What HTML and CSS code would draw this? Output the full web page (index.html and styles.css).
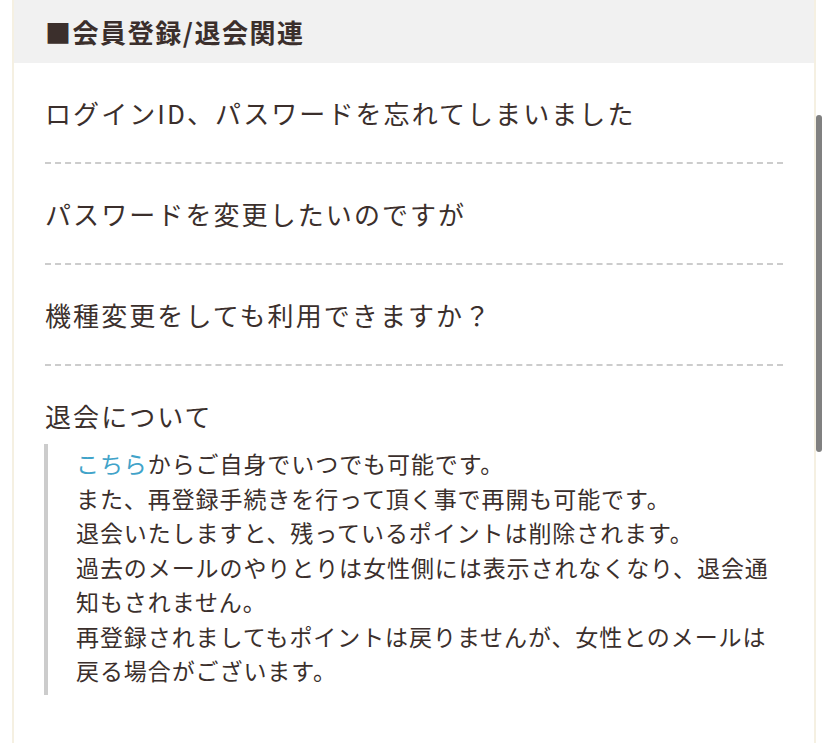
FILE: index.html
```html
<!DOCTYPE html>
<html lang="ja">
<head>
<meta charset="utf-8">
<link rel="stylesheet" href="styles.css">
</head>
<body>
<div class="wrap">
  <h2 class="section-title">■会員登録/退会関連</h2>
  <ul class="faq">
    <li class="faq-item"><p class="q">ログインID、パスワードを忘れてしまいました</p></li>
    <li class="faq-item"><p class="q">パスワードを変更したいのですが</p></li>
    <li class="faq-item"><p class="q">機種変更をしても利用できますか？</p></li>
    <li class="faq-item open">
      <p class="q">退会について</p>
      <blockquote class="a"><a class="link" href="#">こちら</a>からご自身でいつでも可能です。<br>また、再登録手続きを行って頂く事で再開も可能です。<br>退会いたしますと、残っているポイントは削除されます。<br>過去のメールのやりとりは女性側には表示されなくなり、退会通<br>知もされません。<br>再登録されましてもポイントは戻りませんが、女性とのメールは<br>戻る場合がございます。</blockquote>
    </li>
  </ul>
</div>
<div class="scroll-thumb"></div>
</body>
</html>
```
FILE: styles.css
```css
html, body {
  margin: 0;
  padding: 0;
  background: #ffffff;
  overflow: hidden;
}
body {
  font-family: "Noto Sans CJK JP", "Noto Sans", sans-serif;
  color: #3b2f2c;
}
.wrap {
  margin: 0 12px;
  min-height: 743px;
  border-left: 2px solid #f5f0e2;
  border-right: 2px solid #f5f0e2;
  background: #ffffff;
}
.section-title {
  margin: 0;
  height: 63px;
  box-sizing: border-box;
  padding: 0 0 0 31px;
  background: #f1f1f1;
  font-size: 26px;
  font-weight: bold;
  line-height: 63px;
  letter-spacing: 0.06em;
  color: #3b2f2c;
}
.faq {
  list-style: none;
  margin: 0;
  padding: 0 31px 0 31px;
}
.faq-item {
  border-bottom: 2px dashed #cccccc;
}
.faq-item.open {
  border-bottom: none;
}
.q {
  margin: 0;
  padding: 30px 0 29px;
  font-size: 26px;
  line-height: 40px;
  letter-spacing: 0.08em;
}
.open .q {
  padding-bottom: 0;
}
.a {
  margin: 8px 0 0 -1px;
  padding: 2px 0 7px 28px;
  border-left: 4px solid #cccccc;
  font-size: 23px;
  line-height: 34.5px;
  letter-spacing: 0.04em;
  white-space: nowrap;
}
.link {
  color: #41a3c9;
  text-decoration: none;
}
.scroll-thumb {
  position: fixed;
  top: 115px;
  right: 6px;
  width: 6px;
  height: 337px;
  border-radius: 3px;
  background: #808080;
}
```
